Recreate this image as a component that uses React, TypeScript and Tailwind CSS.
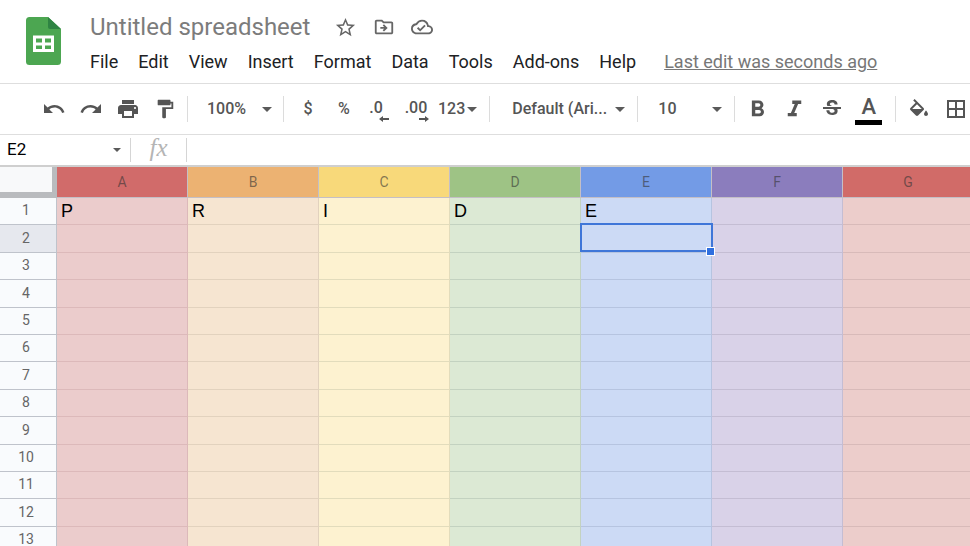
import type { ReactNode } from "react";
import {
  MdBorderAll,
  MdFormatBold,
  MdFormatItalic,
  MdFormatPaint,
  MdOutlineCloudDone,
  MdOutlineDriveFileMove,
  MdPrint,
  MdRedo,
  MdStarBorder,
  MdStrikethroughS,
  MdUndo,
} from "react-icons/md";

const MENUS = ["File", "Edit", "View", "Insert", "Format", "Data", "Tools", "Add-ons", "Help"];

const COLUMNS = [
  { name: "A", head: "bg-[#d16b6a]", body: "bg-[#ebcccc]", line: "border-[#dcb9ba]", text: "P" },
  { name: "B", head: "bg-[#ecb272]", body: "bg-[#f6e5d1]", line: "border-[#e2d2be]", text: "R" },
  { name: "C", head: "bg-[#f8d97a]", body: "bg-[#fdf2d0]", line: "border-[#e2dcbc]", text: "I" },
  { name: "D", head: "bg-[#9ec385]", body: "bg-[#dce9d4]", line: "border-[#c3d2c0]", text: "D" },
  { name: "E", head: "bg-[#739be6]", body: "bg-[#ccdaf5]", line: "border-[#b6c4e0]", text: "E" },
  { name: "F", head: "bg-[#8b7dbd]", body: "bg-[#d9d2e8]", line: "border-[#c4bdd3]", text: "" },
  { name: "G", head: "bg-[#d16b68]", body: "bg-[#eccdcb]", line: "border-[#d8bab9]", text: "" },
];

const ROWS = [1, 2, 3, 4, 5, 6, 7, 8, 9, 10, 11, 12, 13];

function SheetsLogo() {
  return (
    <svg viewBox="0 0 35 48" className="h-12 w-[35px] shrink-0" aria-hidden="true">
      <path d="M3.500 0H22l13 12v32.500a3.500 3.500 0 0 1-3.500 3.500h-28A3.500 3.500 0 0 1 0 44.500v-41A3.500 3.500 0 0 1 3.500 0z" fill="#4ca651" />
      <path d="M22 0l13 12H24a2 2 0 0 1-2-2z" fill="#2f8443" />
      <path d="M7 18.500h21V35H7z" fill="#fff" />
      <path d="M10 21.500h6v4h-6zM19 21.500h6v4h-6zM10 28.500h6v3.500h-6zM19 28.500h6v3.500h-6z" fill="#4ca651" />
    </svg>
  );
}

function PaintBucket() {
  return (
    <svg viewBox="0 0 24 17" className="mb-1 h-[17px] w-6" fill="currentColor" aria-hidden="true">
      <path d="M16.560 8.940L7.620 0 6.210 1.410l2.380 2.380-5.150 5.150a1.490 1.490 0 0 0 0 2.120l5.500 5.500c.29.29.68.44 1.060.44s.77-.15 1.060-.44l5.500-5.500c.59-.58.59-1.530 0-2.120zM5.210 10L10 5.210 14.790 10H5.210zM19 11.500s-2 2.170-2 3.500c0 1.100.9 2 2 2s2-.9 2-2c0-1.330-2-3.500-2-3.500z" />
    </svg>
  );
}

function Caret({ small = false }: { small?: boolean }) {
  return (
    <svg viewBox="0 0 10 5" className={small ? "h-1 w-2 shrink-0" : "h-[5px] w-2.5 shrink-0"} aria-hidden="true">
      <path d="M0 0h10L5 5z" fill="#5a5a5a" />
    </svg>
  );
}

function Tool({ label, narrow = false, children }: { label: string; narrow?: boolean; children: ReactNode }) {
  return (
    <button
      type="button"
      aria-label={label}
      className={`flex h-9 shrink-0 items-center justify-center ${narrow ? "w-9" : "w-[37px]"}`}
    >
      {children}
    </button>
  );
}

function Separator() {
  return <div className="h-[26px] w-px shrink-0 bg-[#dcdcdc]" />;
}

function Picker({ label, value, width }: { label: string; value: string; width: string }) {
  return (
    <label className="flex shrink-0 items-center">
      <select aria-label={label} className={`appearance-none bg-transparent font-medium ${width}`}>
        <option>{value}</option>
      </select>
      <Caret />
    </label>
  );
}

function DecimalArrow({ right = false }: { right?: boolean }) {
  return (
    <svg viewBox="0 0 10 6" className="h-1.5 w-2.5" aria-hidden="true">
      <path d={right ? "M0 2h6V0l4 3-4 3V4H0z" : "M10 2H4V0L0 3l4 3V4h6z"} fill="#555" />
    </svg>
  );
}

export default function App() {
  return (
    <div className="flex h-screen flex-col overflow-hidden bg-white font-['Roboto',sans-serif] text-[#202124]">
      <header className="flex shrink-0 items-start gap-[29px] border-b border-[#dedede] pb-[5px] pl-[26px] pt-[11px]">
        <div className="pt-1.5">
          <SheetsLogo />
        </div>
        <div>
          <div className="flex h-8 items-center text-[#666]">
            <h1 className="mr-6 whitespace-nowrap text-[24px] text-[#7c7c7c]">Untitled spreadsheet</h1>
            <div className="flex items-center gap-4">
              <button type="button" aria-label="Star">
                <MdStarBorder size={23} />
              </button>
              <button type="button" aria-label="Move">
                <MdOutlineDriveFileMove size={22} />
              </button>
              <button type="button" aria-label="See document status">
                <MdOutlineCloudDone size={22} />
              </button>
            </div>
          </div>
          <nav className="mt-0.5 flex h-[33px] items-center gap-5 whitespace-nowrap text-[18px]">
            {MENUS.map((menu) => (
              <button type="button" key={menu}>
                {menu}
              </button>
            ))}
            <a href="#history" className="ml-2 text-[#777] underline">
              Last edit was seconds ago
            </a>
          </nav>
        </div>
      </header>

      <div className="flex h-[51px] shrink-0 items-center overflow-hidden border-b border-[#dedede] pl-[35px] text-[16px] font-medium text-[#555]">
        <Tool label="Undo"><MdUndo size={24} /></Tool>
        <Tool label="Redo"><MdRedo size={24} /></Tool>
        <Tool label="Print"><MdPrint size={24} /></Tool>
        <Tool label="Paint format"><MdFormatPaint size={22} /></Tool>
        <div className="ml-1 flex items-center gap-[11px]">
          <Separator />
          <div className="pl-2">
            <Picker label="Zoom" value="100%" width="w-[55px]" />
          </div>
          <Separator />
        </div>
        <div className="ml-1.5 flex items-center">
          <Tool label="Format as currency" narrow>$</Tool>
          <Tool label="Format as percent" narrow>%</Tool>
          <button type="button" aria-label="Decrease decimal places" className="flex h-9 w-9 shrink-0 flex-col items-center justify-center pt-1">
            <span className="mr-2 leading-4">.0</span>
            <span className="ml-2"><DecimalArrow /></span>
          </button>
          <button type="button" aria-label="Increase decimal places" className="flex h-9 w-9 shrink-0 flex-col items-center justify-center pt-1">
            <span className="leading-4">.00</span>
            <span className="ml-4"><DecimalArrow right /></span>
          </button>
          <button type="button" className="mx-1 flex items-center gap-0.5">
            123
            <Caret />
          </button>
        </div>
        <div className="ml-2 flex items-center gap-3">
          <Separator />
          <div className="pl-2.5">
            <Picker label="Font" value="Default (Ari..." width="w-[103px]" />
          </div>
          <Separator />
          <div className="pl-2">
            <Picker label="Font size" value="10" width="w-[54px]" />
          </div>
          <Separator />
        </div>
        <div className="ml-1 flex items-center">
          <Tool label="Bold"><MdFormatBold size={27} /></Tool>
          <Tool label="Italic"><MdFormatItalic size={27} /></Tool>
          <Tool label="Strikethrough"><MdStrikethroughS size={24} /></Tool>
          <button type="button" aria-label="Text color" className="flex h-9 w-[37px] shrink-0 flex-col items-center justify-center gap-px pt-0.5 text-[22px]">
            <span className="leading-6">A</span>
            <span className="h-[5px] w-[27px] bg-black" />
          </button>
        </div>
        <div className="ml-2 flex items-center gap-1">
          <Separator />
          <Tool label="Fill color"><PaintBucket /></Tool>
        </div>
        <Tool label="Borders"><MdBorderAll size={24} /></Tool>
      </div>

      <div className="flex h-[30px] shrink-0 items-center">
        <label className="flex w-[121px] shrink-0 items-center pl-[7px]">
          <input aria-label="Name box" defaultValue="E2" className="w-[106px] bg-transparent text-[17px] text-black" />
          <Caret small />
        </label>
        <div className="ml-[9px] h-6 w-px bg-[#d5d5d5]" />
        <span className="w-[55px] pb-1 text-center font-['Liberation_Serif',serif] text-[25px] italic leading-7 text-[#b5b5b5]">fx</span>
        <div className="h-6 w-px bg-[#d5d5d5]" />
        <input aria-label="Formula" className="min-w-0 flex-1 px-2 text-[17px]" />
      </div>

      <main className="min-h-0 flex-1 overflow-hidden border-t-2 border-[#cfcfcf]">
        <table className="min-w-full border-separate border-spacing-0">
          <thead>
            <tr className="h-[31px]">
              <th aria-label="Select all" className="w-[57px] min-w-[57px] border-b-[6px] border-r-[5px] border-[#b9bbbe] bg-[#f8f9fa] p-0" />
              {COLUMNS.map((col) => (
                <th
                  key={col.name}
                  scope="col"
                  className={`min-w-[131px] border-b border-r border-[#c4bfc6] p-0 text-[14px] font-normal text-[#333]/60 ${col.name === "G" ? "" : "w-[131px]"} ${col.head}`}
                >
                  {col.name}
                </th>
              ))}
            </tr>
          </thead>
          <tbody>
            {ROWS.map((row) => (
              <tr key={row} className={row % 5 === 2 || row % 5 === 4 ? "h-[28px]" : "h-[27px]"}>
                <th
                  scope="row"
                  className={`border-b border-r border-[#bfc3cb] p-0 pb-0.5 pr-1 text-[14px] font-normal leading-5 text-[#666] ${row === 2 ? "bg-[#e6e8ee]" : "bg-[#f9fbfd]"}`}
                >
                  {row}
                </th>
                {COLUMNS.map((col) => (
                  <td
                    key={col.name}
                    className={`border-b border-r p-0 pl-1 font-['Liberation_Sans',sans-serif] text-[18px] leading-5 text-black ${row === 2 && col.name === "E" ? "relative" : ""} ${col.body} ${col.line}`}
                  >
                    {row === 1 ? col.text : ""}
                    {row === 2 && col.name === "E" && (
                      <div className="absolute -left-px -right-0.5 -top-0.5 bottom-0 border-2 border-[#3f76d8]">
                        <div className="absolute -bottom-1.5 -right-1 size-[9px] border border-white bg-[#2f6fdf]" />
                      </div>
                    )}
                  </td>
                ))}
              </tr>
            ))}
          </tbody>
        </table>
      </main>
    </div>
  );
}
